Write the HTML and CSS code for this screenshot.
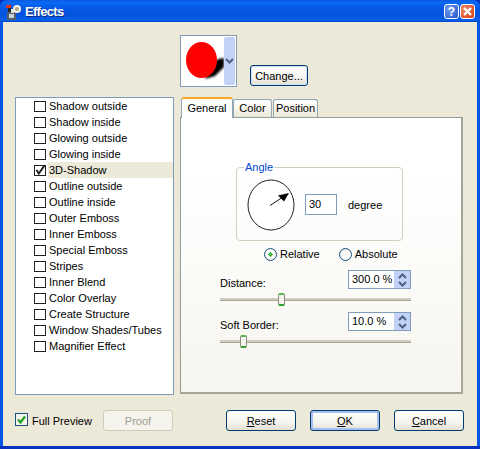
FILE: index.html
```html
<!DOCTYPE html>
<html lang="en">
<head>
    <meta charset="UTF-8">
    <title>Effects</title>
    <link rel="stylesheet" href="styles.css">
</head>
<body>
    <div class="window">
        <div class="titlebar">
            <svg class="app-icon" width="16" height="16" viewBox="0 0 16 16">
                <rect x="2" y="8" width="9" height="8" fill="#56606c"/>
                <rect x="4" y="10" width="5" height="4" fill="#c9d2dc"/>
                <circle cx="12" cy="5" r="4" fill="#f4f1e4"/>
                <circle cx="12" cy="5" r="2" fill="#a9a48f"/>
                <rect x="1" y="1" width="5" height="3" fill="#d8341a"/>
                <rect x="3" y="4" width="3" height="4" fill="#23262c"/>
                <rect x="6" y="5" width="3" height="4" fill="#e6e6e0"/>
            </svg>
            <span class="title">Effects</span>
            <span class="caption-btn help">?</span>
            <span class="caption-btn close">
                <svg width="11" height="11" viewBox="0 0 11 11"><path d="M2 2 L9 9 M9 2 L2 9" stroke="#fff" stroke-width="2.4"/></svg>
            </span>
        </div>

        <div class="client">
            <div class="preview-row">
                <div class="preview">
                    <svg width="43" height="50" viewBox="0 0 43 50">
                        <defs>
                            <filter id="blur"><feGaussianBlur stdDeviation="0.8"/></filter>
                        </defs>
                        <path d="M30 30 L37 23 L43 22 L43 31 L34 40 L24 43 Z" fill="#000" filter="url(#blur)"/>
                        <ellipse cx="20.5" cy="24" rx="15.5" ry="18" fill="#ff0000"/>
                    </svg>
                    <div class="preview-drop">
                        <svg width="9" height="7" viewBox="0 0 9 7"><path d="M1 1 L4.5 4.5 L8 1" fill="none" stroke="#4d6185" stroke-width="2"/></svg>
                    </div>
                </div>
                <button class="btn change">Change...</button>
            </div>

            <div class="main">
                <ul class="effects">
                    <li><span class="check"></span>Shadow outside</li>
                    <li><span class="check"></span>Shadow inside</li>
                    <li><span class="check"></span>Glowing outside</li>
                    <li><span class="check"></span>Glowing inside</li>
                    <li class="selected"><span class="check">
                        <svg width="12" height="11" viewBox="0 0 12 11"><path d="M2.5 5 L4.8 8.5 L10.5 0.5" fill="none" stroke="#222" stroke-width="2"/></svg>
                    </span>3D-Shadow</li>
                    <li><span class="check"></span>Outline outside</li>
                    <li><span class="check"></span>Outline inside</li>
                    <li><span class="check"></span>Outer Emboss</li>
                    <li><span class="check"></span>Inner Emboss</li>
                    <li><span class="check"></span>Special Emboss</li>
                    <li><span class="check"></span>Stripes</li>
                    <li><span class="check"></span>Inner Blend</li>
                    <li><span class="check"></span>Color Overlay</li>
                    <li><span class="check"></span>Create Structure</li>
                    <li><span class="check"></span>Window Shades/Tubes</li>
                    <li><span class="check"></span>Magnifier Effect</li>
                </ul>

                <div class="tabs">
                    <div class="tab-strip">
                        <span class="tab active">General</span>
                        <span class="tab color-tab">Color</span>
                        <span class="tab position-tab">Position</span>
                    </div>
                    <div class="tab-panel">
                        <fieldset class="angle">
                            <legend>Angle</legend>
                            <svg class="dial" width="48" height="52" viewBox="0 0 48 52">
                                <ellipse cx="24" cy="26" rx="23" ry="25" fill="#fff" stroke="#222" stroke-width="1"/>
                                <path d="M23 26.5 L36 18" stroke="#111" stroke-width="1"/>
                                <path d="M42 14 L31 16.5 L37 22.5 Z" fill="#000"/>
                            </svg>
                            <span class="field angle-value">30</span>
                            <span>degree</span>
                        </fieldset>

                        <div class="radios">
                            <span class="radio-item"><span class="radio on"></span>Relative</span>
                            <span class="radio-item"><span class="radio"></span>Absolute</span>
                        </div>

                        <div class="setting distance">
                            <span>Distance:</span>
                            <span class="spin">
                                <span class="spin-value">300.0 %</span>
                                <span class="spin-arrows">
                                    <svg width="9" height="6" viewBox="0 0 9 6"><path d="M1 5 L4.5 1.5 L8 5" fill="none" stroke="#4d6185" stroke-width="2"/></svg>
                                    <svg width="9" height="6" viewBox="0 0 9 6"><path d="M1 1 L4.5 4.5 L8 1" fill="none" stroke="#4d6185" stroke-width="2"/></svg>
                                </span>
                            </span>
                        </div>
                        <div class="slider"><span class="thumb" style="left: 58px"></span></div>

                        <div class="setting">
                            <span>Soft Border:</span>
                            <span class="spin">
                                <span class="spin-value">10.0 %</span>
                                <span class="spin-arrows">
                                    <svg width="9" height="6" viewBox="0 0 9 6"><path d="M1 5 L4.5 1.5 L8 5" fill="none" stroke="#4d6185" stroke-width="2"/></svg>
                                    <svg width="9" height="6" viewBox="0 0 9 6"><path d="M1 1 L4.5 4.5 L8 1" fill="none" stroke="#4d6185" stroke-width="2"/></svg>
                                </span>
                            </span>
                        </div>
                        <div class="slider"><span class="thumb" style="left: 20px"></span></div>
                    </div>
                </div>
            </div>

            <div class="footer">
                <span class="full-preview">
                    <span class="xp-check">
                        <svg width="11" height="11" viewBox="0 0 11 11"><path d="M2 5.5 L4.5 8.5 L9 2.5" fill="none" stroke="#21a121" stroke-width="2.2"/></svg>
                    </span>Full Preview
                </span>
                <button class="btn proof" disabled>Proof</button>
                <span class="footer-right">
                    <button class="btn"><u>R</u>eset</button>
                    <button class="btn default"><u>O</u>K</button>
                    <button class="btn"><u>C</u>ancel</button>
                </span>
            </div>
        </div>
    </div>
</body>
</html>
```

FILE: styles.css
```css
html, body {
    margin: 0;
    padding: 0;
}
body {
    font-family: "Liberation Sans", Arial, sans-serif;
    font-size: 11px;
    color: #000;
    background-color: #0a2fb8;
}
.window {
    width: 480px;
    height: 449px;
    display: flex;
    flex-direction: column;
    box-sizing: border-box;
    background: linear-gradient(to bottom, #0757e6 446px, #0a33c0 446px);
    border-radius: 7px 7px 0 0;
    overflow: hidden;
}

/* title bar */
.titlebar {
    height: 22px;
    flex: none;
    display: flex;
    align-items: center;
    box-sizing: border-box;
    padding: 1px 5px 0 5px;
    background: linear-gradient(to bottom, #0a5be0 0, #0a6af5 3px, #0558e4 8px, #0454dc 16px, #0661ee 20px, #0345c6 22px);
}
.app-icon {
    flex: none;
}
.title {
    flex: 1;
    margin-left: 4px;
    color: #fff;
    font-weight: 700;
    font-size: 13px;
    letter-spacing: -0.7px;
    text-shadow: 1px 1px 0 #0a2a80;
}
.caption-btn {
    width: 15px;
    height: 15px;
    box-sizing: border-box;
    margin-left: 1px;
    border: 1px solid #fff;
    border-radius: 3px;
    display: flex;
    align-items: center;
    justify-content: center;
    color: #fff;
    font-weight: 700;
    font-size: 12px;
}
.help {
    background: radial-gradient(circle at 30% 30%, #6f9bf0, #2a55c8);
}
.close {
    background: radial-gradient(circle at 30% 30%, #ef8a66, #d43b12);
}

/* client area */
.client {
    flex: 1;
    margin: 0 3px 3px 3px;
    background-color: #ece9d8;
    display: flex;
    flex-direction: column;
}
.preview-row {
    height: 52px;
    margin-top: 13px;
    display: flex;
    align-items: flex-start;
    padding-left: 177px;
}
.preview {
    width: 57px;
    height: 52px;
    box-sizing: border-box;
    border: 1px solid #7f9db9;
    background-color: #fff;
    display: flex;
    justify-content: space-between;
}
.preview-drop {
    width: 11px;
    margin: 1px 1px 1px 0;
    background-color: #c1d2f6;
    border-radius: 2px;
    display: flex;
    align-items: center;
    justify-content: center;
}
.btn {
    width: 70px;
    height: 21px;
    padding: 0;
    box-sizing: border-box;
    font: inherit;
    color: #000;
    border: 1px solid #003c74;
    border-radius: 3px;
    background: linear-gradient(to bottom, #fff 0, #f5f4ee 60%, #e3e0d2 100%);
}
.change {
    width: 58px;
    margin: 30px 0 0 13px;
    box-shadow: inset 0 0 0 1px #cfe0f5;
}
.default {
    box-shadow: inset 0 0 0 2px #a6bfec;
}
.proof {
    color: #a1a192;
    border-color: #cfccbb;
    background: #f4f3ec;
}

.main {
    display: flex;
    margin: 10px 0 0 12px;
    gap: 6px;
}
.effects {
    width: 159px;
    height: 298px;
    box-sizing: border-box;
    list-style: none;
    margin: 0;
    padding: 0;
    border: 1px solid #7f9db9;
    background-color: #fff;
}
.effects li {
    height: 16px;
    line-height: 15px;
    padding-left: 18px;
    display: flex;
    align-items: center;
}
.check {
    width: 12px;
    height: 11px;
    box-sizing: border-box;
    border: 1px solid #222;
    background-color: #fff;
    margin-right: 3px;
    flex: none;
    display: flex;
    align-items: center;
    justify-content: center;
}
.check svg {
    flex: none;
}
.effects li.selected {
    background: linear-gradient(to right, #fff 32px, #ece9d8 32px);
}

/* tabs */
.tabs {
    width: 283px;
}
.tab-strip {
    display: flex;
    height: 20px;
    align-items: flex-end;
    padding-left: 1px;
    position: relative;
    z-index: 1;
}
.tab {
    height: 18px;
    box-sizing: border-box;
    padding-top: 2px;
    text-align: center;
    border: 1px solid #91a7b4;
    border-bottom: none;
    border-radius: 3px 3px 0 0;
    background: linear-gradient(to bottom, #fff, #ece9d8);
}
.color-tab {
    width: 39px;
}
.position-tab {
    width: 45px;
    margin-left: 1px;
}
.tab.active {
    width: 52px;
    height: 21px;
    padding-top: 3px;
    background: #fff;
    border-top: 2px solid #f9a825;
    border-color: #f9a825 #91a7b4 #fff;
    margin-bottom: -1px;
}
.tab-panel {
    height: 277px;
    box-sizing: border-box;
    border: 1px solid #919b9c;
    border-right: 2px solid #a5a599;
    border-bottom: 2px solid #a5a599;
    background: linear-gradient(to bottom, #fff 0, #fff 20%, #f6f5ef 100%);
    padding: 43px 0 0 39px;
}

.angle {
    width: 167px;
    height: 80px;
    box-sizing: border-box;
    margin: 0 0 0 16px;
    padding: 0 0 4px 10px;
    border: 1px solid #d0d0bf;
    border-radius: 4px;
    display: flex;
    align-items: center;
}
.angle legend {
    color: #0046d5;
    padding: 0 1px;
    margin-left: -3px;
}
.dial {
    flex: none;
}
.field {
    box-sizing: border-box;
    border: 1px solid #7f9db9;
    background-color: #fff;
}
.angle-value {
    width: 32px;
    height: 21px;
    line-height: 19px;
    padding-left: 3px;
    margin: 0 11px 0 10px;
}

.radios {
    display: flex;
    margin: 5px 0 0 44px;
    gap: 19px;
    height: 16px;
    align-items: center;
}
.radio-item {
    display: flex;
    align-items: center;
    gap: 3px;
}
.radio {
    width: 13px;
    height: 13px;
    box-sizing: border-box;
    border: 1px solid #1c5180;
    border-radius: 50%;
    background: radial-gradient(circle at 60% 60%, #fff 40%, #d9d6c8 100%);
}
.radio.on {
    background: radial-gradient(circle, #2fb52f 0, #4fc14f 25%, #fff 30%, #e8e6da 100%);
}

.setting {
    display: flex;
    justify-content: space-between;
    align-items: flex-end;
    width: 191px;
    height: 19px;
}
.distance {
    margin-top: 8px;
}
.spin {
    width: 63px;
    height: 19px;
    box-sizing: border-box;
    border: 1px solid #7f9db9;
    background-color: #fff;
    display: flex;
}
.spin-value {
    flex: 1;
    padding-left: 3px;
    line-height: 16px;
    white-space: nowrap;
}
.spin-arrows {
    width: 16px;
    background-color: #c1d2f6;
    display: flex;
    flex-direction: column;
    align-items: center;
    justify-content: center;
    gap: 2px;
}
.slider {
    position: relative;
    width: 191px;
    height: 3px;
    margin: 9px 0 11px 0;
    background-color: #d0cdbf;
    border-bottom: 1px solid #a9a697;
    box-sizing: border-box;
}
.thumb {
    position: absolute;
    top: -5px;
    width: 7px;
    height: 13px;
    box-sizing: border-box;
    border: 1px solid #8d8c80;
    border-top: 2px solid #55b84f;
    border-bottom: 2px solid #2ca02c;
    border-radius: 2px;
    background-color: #f4f3ec;
}

/* bottom row */
.footer {
    margin: 15px 0 0 12px;
    display: flex;
    align-items: center;
    height: 21px;
}
.full-preview {
    display: flex;
    align-items: center;
    width: 88px;
}
.xp-check {
    width: 13px;
    height: 13px;
    box-sizing: border-box;
    border: 1px solid #1c5180;
    background-color: #f4f3ec;
    margin: 0 4px 2px 0;
    display: flex;
    align-items: center;
    justify-content: center;
}
.footer-right {
    display: flex;
    gap: 14px;
    margin-left: 53px;
}
```
